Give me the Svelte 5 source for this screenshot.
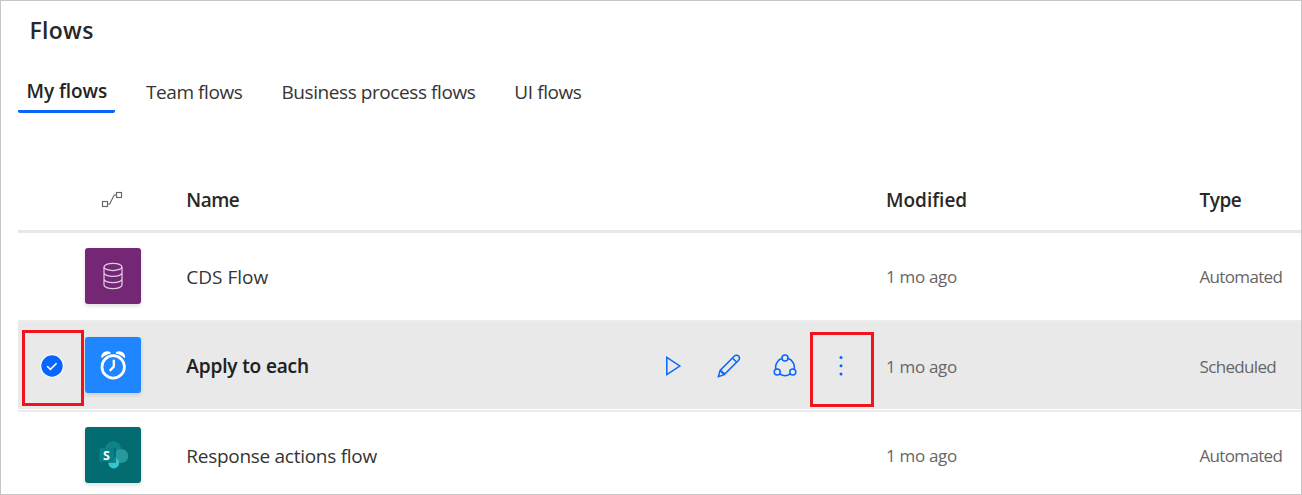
<script>
  const tabs = ['Team flows', 'Business process flows', 'UI flows'];
  const rows = [
    { name: 'CDS Flow', icon: 'cds', modified: '1 mo ago', type: 'Automated' },
    { name: 'Apply to each', icon: 'clock', modified: '1 mo ago', type: 'Scheduled', selected: true },
    { name: 'Response actions flow', icon: 'sp', modified: '1 mo ago', type: 'Automated' }
  ];
</script>

<main class="page">
  <h1>Flows</h1>
  <nav>
    <span class="tab active">My flows</span>
    {#each tabs as t}<span class="tab">{t}</span>{/each}
  </nav>
  <section class="table">
    <div class="row head">
      <span></span>
      <span class="kind">
        <svg width="22" height="18" viewBox="0 0 22 18" fill="none" stroke="#666" stroke-width="1.15">
          <rect x="1.5" y="11.5" width="5" height="5" /><rect x="15.5" y="2.5" width="5" height="5" />
          <path d="M6.5 14h2.2L13.2 5h2.2" />
        </svg>
      </span>
      <span class="title tight">Name</span><span></span><span class="title">Modified</span><span class="title tight">Type</span>
    </div>
    {#each rows as r}
      <div class="row" class:selected={r.selected}>
        <span class="check">
          {#if r.selected}
            <svg width="24" height="24" viewBox="0 0 24 24"><circle cx="12" cy="12" r="11.8" fill="#fff" /><circle cx="12" cy="12" r="10.7" fill="#0866ff" /><path d="M7.2 12.2l3.2 3.2 6.2-6.2" fill="none" stroke="#fff" stroke-width="1.6" /></svg>
            <i class="mark first"></i>
          {/if}
        </span>
        <span class="tile {r.icon}">
          {#if r.icon === 'cds'}
            <svg width="56" height="56" viewBox="0 0 56 56" fill="none" stroke="#e3cbe3" stroke-width="1.25"><ellipse cx="28" cy="18.9" rx="9" ry="3.6" /><path d="M19 18.9v18.2c0 2 4 3.6 9 3.6s9-1.6 9-3.6V18.9M19 24.8c0 2 4 3.6 9 3.6s9-1.6 9-3.6M19 31c0 2 4 3.6 9 3.6s9-1.6 9-3.6" /></svg>
          {:else if r.icon === 'clock'}
            <svg width="56" height="56" viewBox="0 0 56 56" fill="none" stroke="#fff"><circle cx="28.2" cy="29.9" r="11.2" stroke-width="2.7" /><path d="M28.8 22.8v6.8l-4.1 4.3" stroke-width="2.3" /><path d="M16.3 20.6c-.6-4.6 5.4-8.2 9.3-5.2l-.2 1.3c-3.4.5-6.2 1.8-8.2 4.2zM40.1 20.6c.6-4.6-5.4-8.2-9.3-5.2l.2 1.3c3.4.5 6.2 1.8 8.2 4.2z" fill="#fff" stroke="none" /></svg>
          {:else}
            <svg width="56" height="56" viewBox="0 0 56 56"><circle cx="28.2" cy="22.2" r="8" fill="#108386" /><circle cx="36.2" cy="29" r="7" fill="#28999d" /><circle cx="28.8" cy="36" r="5.4" fill="#37c6d0" /><path d="M17 21h14v15H17z" fill="#045b5e" opacity=".6" /><rect x="14.3" y="21" width="14.5" height="14" rx="1" fill="#05818a" /><text x="21.4" y="32.6" text-anchor="middle" fill="#fff" font-size="12.5" font-weight="700" font-family="Open Sans, sans-serif">S</text></svg>
          {/if}
        </span>
        <span class="name" class:long={r.name.length > 15}>{r.name}</span>
        <span class="actions">
          {#if r.selected}
            <svg width="24" height="24" viewBox="0 0 24 24"><path d="M5.8 3.3v17.4L18.8 12z" /></svg>
            <svg width="24" height="24" viewBox="0 0 24 24"><path d="M1.4 22.6l1.7-6.2L17.4 2.1a2.9 2.9 0 0 1 4.2 0 2.9 2.9 0 0 1 0 4.2L7.3 20.6zM3.1 16.4l4.2 4.2M15.5 4l4.2 4.2M3 16.6c2 0 2.2.5 2.1 2 1.5-.1 2.1.2 2 2" /></svg>
            <svg width="24" height="24" viewBox="0 0 24 24"><circle cx="12" cy="4" r="3" /><circle cx="4.2" cy="18.1" r="3" /><circle cx="19.8" cy="18.1" r="3" /><path d="M9.1 4.3A9.5 9.5 0 0 0 2.9 15.4M14.9 4.3a9.5 9.5 0 0 1 6.2 11.1M6.7 19.8a9 9 0 0 0 10.6 0" /></svg>
            <svg class="more" width="24" height="24" viewBox="0 0 24 24"><circle cx="12" cy="3.5" r="1.5" /><circle cx="12" cy="11.8" r="1.5" /><circle cx="12" cy="20.1" r="1.5" /></svg>
            <i class="mark second"></i>
          {/if}
        </span>
        <span class="meta">{r.modified}</span>
        <span class="meta type">{r.type}</span>
      </div>
    {/each}
  </section>
</main>

<style>
  .page { box-sizing: border-box; width: 1302px; height: 495px; overflow: hidden; border: 1px solid #c6c6c6; background: #fff; color: #292827; font-family: 'Open Sans', 'Noto Sans', sans-serif; font-variant-ligatures: none; }
  h1 { margin: 14px 0 0 28.5px; height: 30px; font-size: 23px; line-height: 30px; font-weight: 600; letter-spacing: .3px; }
  nav { display: flex; gap: 15px; margin: 28px 0 0 17px; height: 41px; }
  .tab { box-sizing: border-box; height: 40px; padding: 5px 12px 0; font-size: 19px; line-height: 28px; letter-spacing: -.42px; color: #353433; white-space: nowrap; }
  .tab.active { width: 97px; padding: 4px 0 0 8.5px; height: 40px; border-bottom: 3px solid #0866ff; border-radius: 2px; font-weight: 600; letter-spacing: -.05px; color: #252423; margin-right: 4px; }
  .table { margin: 55px 0 0 17px; }
  .row { box-sizing: border-box; position: relative; display: grid; grid-template-columns: 67.3px 101px 463.2px 236.5px 313.5px 1fr; align-items: center; height: 89.5px; border-bottom: 2px solid #ececec; }
  .head { height: 63.5px; border-bottom: 3px solid #e8e8e8; }
  .selected { background: #e9e9e9; box-shadow: inset 0 -1px #fff; }
  .title { padding-top: 2px; font-size: 19px; font-weight: 600; }
  .tight { letter-spacing: -.5px; }
  .kind { padding: 2px 0 0 16px; height: 20px; }
  .check { padding-left: 22px; height: 24px; }
  svg { display: block; }
  .tile { width: 56px; height: 56px; border-radius: 3px; box-shadow: 0 2px 4px #0002; }
  .cds { background: #742774; }
  .clock { background: #2086ff; position: relative; top: -.4px; }
  .sp { background: #036c70; }
  .name { padding-top: 1px; font-size: 19px; white-space: nowrap; color: #353433; }
  .long { letter-spacing: -.28px; }
  .selected .name { font-weight: 600; letter-spacing: -.12px; color: #201f1e; -webkit-text-stroke: .15px; }
  .actions { display: flex; align-items: center; gap: 32px; padding: 0 0 0 11.7px; fill: none; stroke: #0866ff; stroke-width: 1.5; }
  .more { fill: #0866ff; stroke: none; }
  .meta { padding-top: 1px; font-size: 17px; letter-spacing: -.32px; white-space: nowrap; color: #666; }
  .type { letter-spacing: -.66px; }
  .mark { position: absolute; box-sizing: border-box; border: 3px solid #f0141e; }
  .first { left: 4px; top: 8px; width: 62px; height: 76px; }
  .second { left: 792px; top: 10.4px; width: 64px; height: 75px; }
</style>
